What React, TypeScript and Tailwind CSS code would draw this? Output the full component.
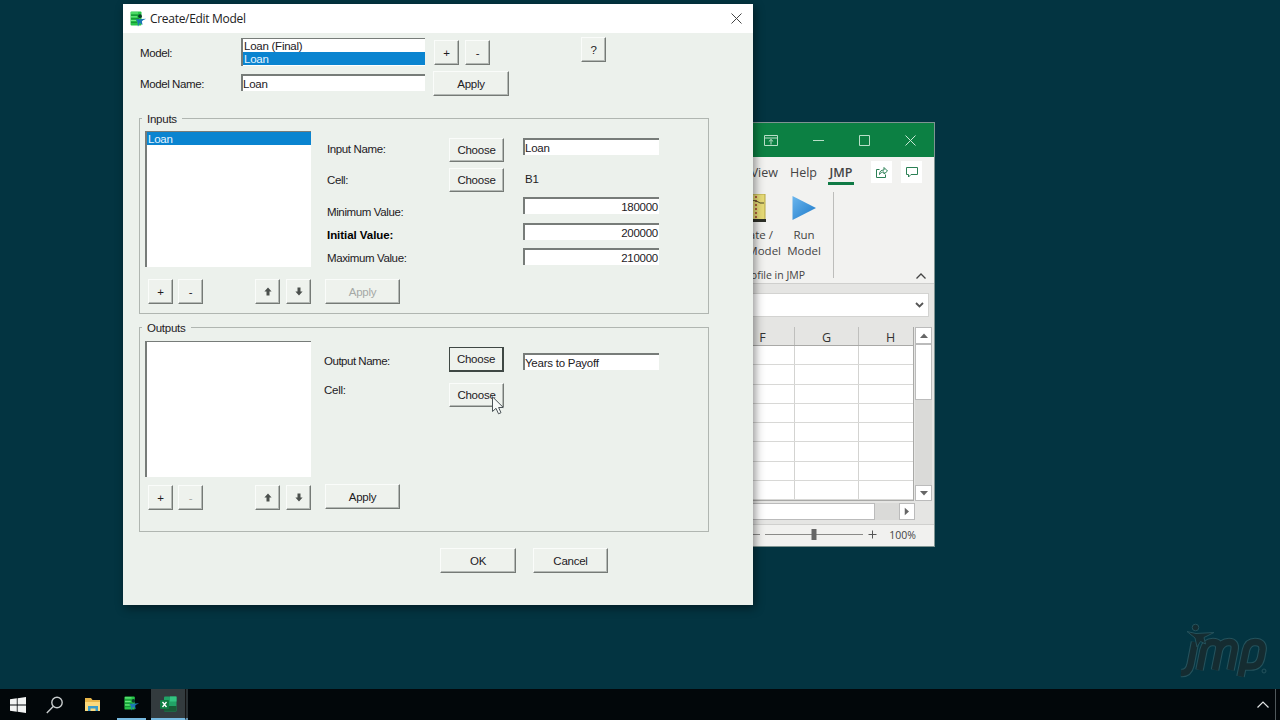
import type { ReactNode } from 'react'
import { clsx } from 'clsx'

function ModelIcon({ className }: { className?: string }) {
  return (
    <svg viewBox="0 0 16 16" className={className}>
      <rect x="0.5" y="0.5" width="11" height="14" rx="1" fill="#27c548" />
      <path d="M1 4.200h10M1 7.800h8M1 11.300h6" stroke="#12852f" strokeWidth="0.9" />
      <path d="M1 2h7M1 5.800h6M1 9.500h5" stroke="#7df08c" strokeWidth="0.9" />
      <circle cx="10" cy="5.200" r="1.900" fill="#0b3b2a" />
      <path d="M5.500 8c3 .8 6.500 0 10.500-.2-1.800 1.200-3.600 1.600-4 2.500-.2 1.200.6 2.500.4 3.700-1.400-.8-2-1.900-2.800-2.200L8 15.700c-.4-2.500.2-5-2.500-7.700z" fill="#1c78b4" />
    </svg>
  )
}

interface ButtonProps {
  children: ReactNode
  className?: string
  disabled?: boolean
  focused?: boolean
}

function Button({ children, className, disabled, focused }: ButtonProps) {
  return (
    <button
      className={clsx(
        'flex shrink-0 items-center justify-center bg-[#eef2ed]',
        focused
          ? 'border border-r-2 border-b-2 border-[#3f4844]'
          : 'border border-t-[#fafcfa] border-l-[#fafcfa] border-r-[#757a76] border-b-[#757a76] shadow-[inset_-1px_-1px_0_#b4b9b5]',
        disabled ? 'text-[#a5a9a6]' : 'text-[#1d201e]',
        className,
      )}
    >
      {children}
    </button>
  )
}

function SmallButton({ children, disabled, className }: ButtonProps) {
  return (
    <Button disabled={disabled} className={clsx('h-[25px] w-[25px]', className)}>
      {children}
    </Button>
  )
}

function Arrow({ down }: { down?: boolean }) {
  return (
    <svg viewBox="0 0 8 9" className={clsx('h-[9px] w-2', down && 'rotate-180')}>
      <path d="M4 0.500 7.600 4.500H5.500V8.500H2.500V4.500H0.400z" fill="#4b504d" />
    </svg>
  )
}

function Field({ children, right, className }: { children: ReactNode; right?: boolean; className?: string }) {
  return (
    <div
      className={clsx(
        'flex h-[17px] items-center border-t-2 border-l-2 border-t-[#777c79] border-l-[#777c79] bg-white pr-px',
        right ? 'justify-end' : 'justify-start',
        className,
      )}
    >
      {children}
    </div>
  )
}

function ListBox({ items, selected, className }: { items: string[]; selected?: string; className?: string }) {
  return (
    <ul className={clsx('border-t border-l-2 border-[#777c79] bg-white', className)}>
      {items.map((item) => (
        <li
          key={item}
          className={clsx('h-[13px] pl-px leading-[14px]', item === selected && 'bg-[#0a84d0] text-[#e6f4ff]')}
        >
          {item}
        </li>
      ))}
    </ul>
  )
}

function Group({ title, children, className }: { title: string; children: ReactNode; className?: string }) {
  return (
    <fieldset className={clsx('ml-4 w-[570px] border border-[#b0b6b1]', className)}>
      <legend className="ml-[2px] h-[14px] px-[5px] leading-[16px]">{title}</legend>
      {children}
    </fieldset>
  )
}

function ListPanel({ items, selected, emptyList }: { items: string[]; selected?: string; emptyList?: boolean }) {
  return (
    <div className="ml-[5px] w-[166px]">
      <ListBox items={items} selected={selected} className="h-[136px]" />
      <div className={clsx('flex pl-[3px]', emptyList ? 'mt-2' : 'mt-3')}>
        <SmallButton>+</SmallButton>
        <SmallButton disabled={emptyList} className="ml-[5px]">-</SmallButton>
        <SmallButton className="ml-auto"><Arrow /></SmallButton>
        <SmallButton className="ml-[6px]"><Arrow down /></SmallButton>
      </div>
    </div>
  )
}

function ModelDialog() {
  return (
    <div className="absolute top-1 left-[123px] h-[601px] w-[630px] bg-[#ecf1ec] text-[11.500px] leading-[14px] tracking-[-0.250px] text-[#1d201e] shadow-[2px_3px_9px_rgba(0,0,0,0.45)]">
      <header className="flex h-[29px] items-center bg-white pr-[11px] pl-[7px]">
        <ModelIcon className="h-4 w-4" />
        <h1 className="ml-1 font-['Open_Sans',sans-serif] text-[12px] tracking-[-0.300px] text-[#222]">
          Create/Edit Model
        </h1>
        <svg viewBox="0 0 11 11" className="ml-auto h-[11px] w-[11px]">
          <path d="M.5.5l10 10M10.500.5l-10 10" stroke="#444" fill="none" />
        </svg>
      </header>

      <section className="flex h-[78px] pl-[17px]">
        <div className="flex w-[101px] flex-col gap-[17px] pt-[13px] tracking-[-0.400px]">
          <label>Model:</label>
          <label>Model Name:</label>
        </div>
        <div className="flex w-[184px] flex-col gap-2 pt-[5px]">
          <ListBox items={['Loan (Final)', 'Loan']} selected="Loan" className="h-[28px]" />
          <Field>Loan</Field>
        </div>
        <div className="ml-2 flex flex-col gap-[6px] pt-[7px]">
          <div className="flex gap-[6px] pl-px">
            <SmallButton>+</SmallButton>
            <SmallButton>-</SmallButton>
          </div>
          <Button className="h-[25px] w-[76px]">Apply</Button>
        </div>
        <div className="ml-[72px] pt-1">
          <SmallButton>?</SmallButton>
        </div>
      </section>

      <Group title="Inputs" className="h-[203px]">
        <div className="flex pt-[6px]">
          <ListPanel items={['Loan']} selected="Loan" />
          <div className="ml-[14px] flex w-[124px] flex-col tracking-[-0.380px]">
            <label className="mt-[11px] ml-[2px]">Input Name:</label>
            <label className="mt-[17px] ml-[2px]">Cell:</label>
            <label className="mt-[18px] ml-[2px]">Minimum Value:</label>
            <label className="mt-[9px] ml-[2px] font-bold tracking-[-0.050px] text-black">Initial Value:</label>
            <label className="mt-[9px] ml-[2px]">Maximum Value:</label>
            <Button disabled className="mt-[14px] h-[25px] w-[75px] tracking-[-0.250px]">Apply</Button>
          </div>
          <div className="flex w-[74px] flex-col gap-[6px] pt-[7px]">
            <Button className="h-[24px] w-[55px]">Choose</Button>
            <Button className="h-[24px] w-[55px]">Choose</Button>
          </div>
          <div className="w-[136px] pt-[7px]">
            <Field>Loan</Field>
            <p className="mt-[17px] ml-[2px]">B1</p>
            <Field right className="mt-[11px]">180000</Field>
            <Field right className="mt-[9px]">200000</Field>
            <Field right className="mt-[8px]">210000</Field>
          </div>
        </div>
      </Group>

      <Group title="Outputs" className="mt-[6px] h-[212px]">
        <div className="flex pt-[7px]">
          <ListPanel items={[]} emptyList />
          <div className="ml-[13px] flex w-[125px] flex-col">
            <label className="mt-[13px] tracking-[-0.480px]">Output Name:</label>
            <label className="mt-[15px]">Cell:</label>
            <Button className="mt-[87px] ml-px h-[25px] w-[75px]">Apply</Button>
          </div>
          <div className="flex w-[74px] flex-col gap-[11px] pt-[6px]">
            <Button focused className="h-[25px] w-[55px]">Choose</Button>
            <Button className="h-[24px] w-[55px]">Choose</Button>
          </div>
          <div className="w-[136px] pt-[12px]">
            <Field>Years to Payoff</Field>
          </div>
        </div>
      </Group>

      <footer className="mt-4 flex gap-[17px] pl-[317px]">
        <Button className="h-[25px] w-[76px]">OK</Button>
        <Button className="h-[25px] w-[75px]">Cancel</Button>
      </footer>
    </div>
  )
}

function Triangle({ className }: { className?: string }) {
  return (
    <svg viewBox="0 0 8 5" className={clsx('h-[5px] w-2', className)}>
      <path d="M0 5 4 0.500 8 5z" fill="#666" />
    </svg>
  )
}

function ExcelWindow() {
  const columns = ['F', 'G', 'H']
  const rows = [0, 1, 2, 3, 4, 5, 6, 7]

  return (
    <div className="absolute top-[122px] left-[700px] flex h-[425px] w-[235px] flex-col border border-[#7f9492] bg-[#e5e5e3] font-['Open_Sans',sans-serif] text-[#444]">
      <header className="flex h-[34px] shrink-0 items-center justify-end gap-[35px] bg-[#0c8043] pr-[18px]">
        <svg viewBox="0 0 14 11" className="h-[11px] w-[14px]" fill="none" stroke="#b9dfc8">
          <path d="M.5.5h13v10H.5zM.5 3h13M7 9.500V4.500M4.800 6.500 7 4.500l2.200 2" />
        </svg>
        <svg viewBox="0 0 11 11" className="h-[11px] w-[11px]" stroke="#b9dfc8">
          <path d="M0 5.500h11" />
        </svg>
        <svg viewBox="0 0 11 11" className="h-[11px] w-[11px]" fill="none" stroke="#b9dfc8">
          <path d="M.5.5h10v10H.5z" />
        </svg>
        <svg viewBox="0 0 11 11" className="h-[11px] w-[11px]" fill="none" stroke="#c9e8d5">
          <path d="M.5.5l10 10M10.500.5l-10 10" />
        </svg>
      </header>

      <nav className="flex h-[32px] shrink-0 justify-end bg-[#f2f2f0] pr-3 text-[12.500px] leading-[18px]">
        <span className="mt-[7px]">View</span>
        <span className="mt-[7px] ml-3">Help</span>
        <span className="mt-[7px] ml-[11px] h-[21px] w-[26px] border-b-[3px] border-[#0f7a45] text-center font-semibold">
          JMP
        </span>
        <span className="mt-1 ml-[17px] flex h-[22px] w-[21px] items-center justify-center bg-white">
          <svg viewBox="0 0 12 12" className="h-3 w-3" fill="none" stroke="#2b8055">
            <path d="M3.500 3.500H.5v8h9V8.500M3.500 8.500c0-3 1.500-4.500 4.500-4.500V1.500L11.500 5 8 8V6C6 6 4.500 6.800 3.500 8.500z" />
          </svg>
        </span>
        <span className="mt-1 ml-[9px] flex h-[22px] w-[21px] items-center justify-center bg-white">
          <svg viewBox="0 0 12 12" className="h-3 w-3" fill="none" stroke="#2b8055">
            <path d="M.5 1.500h11v7H5l-2.500 2.500V8.500h-2z" />
          </svg>
        </span>
      </nav>

      <div className="flex h-[95px] shrink-0 justify-end border-b border-[#cfcfcd] bg-[#f2f2f0] text-[11.500px] leading-4">
        <div className="flex flex-col items-end">
          <div className="flex">
            <div className="flex w-20 flex-col items-end pt-[5px] whitespace-nowrap">
              <svg viewBox="0 0 24 28" className="mr-[15px] h-7 w-6">
                <rect x="0" y="0" width="23" height="26" fill="#e8dc78" stroke="#b5a744" />
                <rect x="0" y="25" width="24" height="3" fill="#2e3028" />
                <path d="M14 2v22" stroke="#a33b2b" strokeWidth="1.500" strokeDasharray="2 2" />
                <path d="M2 11C8 6 12 5 18 9h4" stroke="#4d4828" fill="none" />
              </svg>
              <span className="mt-[5px] mr-2">Create /</span>
              <span>Edit Model</span>
            </div>
            <div className="ml-[4px] flex w-[38px] flex-col items-center pt-[5px]">
              <svg viewBox="0 0 25 27" className="h-7 w-[25px]">
                <defs>
                  <linearGradient id="run" x1="0" y1="0" x2="1" y2="1">
                    <stop offset="0" stopColor="#6bb6ee" />
                    <stop offset="1" stopColor="#1b78c8" />
                  </linearGradient>
                </defs>
                <path d="M.5 1.500 24 13.500.5 25.500z" fill="url(#run)" />
              </svg>
              <span className="mt-[5px]">Run</span>
              <span>Model</span>
            </div>
          </div>
          <p className="mt-2 pr-[18px] text-[10.500px]">Profile in JMP</p>
        </div>
        <div className="mt-[3px] ml-[10px] h-[86px] w-px bg-[#bdbdbb]" />
        <div className="flex w-[102px] items-end justify-end pr-2 pb-1">
          <svg viewBox="0 0 10 6" className="h-[6px] w-[10px]" fill="none" stroke="#444" strokeWidth="1.300">
            <path d="M.5 5.500 5 1l4.500 4.500" />
          </svg>
        </div>
      </div>

      <div className="mt-[9px] mr-[5px] flex h-6 shrink-0 items-center justify-end border border-[#d3d3d1] bg-white pr-1">
        <svg viewBox="0 0 9 6" className="h-[6px] w-[9px]" fill="none" stroke="#555" strokeWidth="1.800">
          <path d="M1 1l3.500 3.500L8 1" />
        </svg>
      </div>

      <div className="mt-[10px] flex h-[174px] shrink-0">
        <div className="w-[213px] overflow-hidden border-r border-b border-[#a9a9a7]">
          <div className="flex h-[19px] border-b border-[#a9a9a7] text-[12.500px] leading-[22px] text-[#333]">
            {columns.map((column) => (
              <span
                key={column}
                className="w-16 shrink-0 border-r border-[#bfbfbd] text-center first:w-[94px] first:pl-[30px]"
              >
                {column}
              </span>
            ))}
          </div>
          {rows.map((row) => (
            <div key={row} className="flex h-[19.300px] border-b border-[#d8d8d6] bg-white">
              <span className="w-[94px] border-r border-[#d3d3d1]" />
              <span className="w-16 border-r border-[#d3d3d1]" />
            </div>
          ))}
        </div>
        <div className="ml-px flex w-[17px] flex-col bg-[#dadad8]">
          <div className="flex h-[17px] items-center justify-center border border-[#bbb] bg-white"><Triangle /></div>
          <div className="h-14 border border-[#bbb] bg-white" />
          <div className="mt-auto flex h-4 items-center justify-center border border-[#bbb] bg-white">
            <Triangle className="rotate-180" />
          </div>
        </div>
      </div>

      <div className="mt-[2px] flex h-[17px] w-[214px] shrink-0 justify-end bg-[#dadad8]">
        <div className="flex-1 border border-[#bbb] bg-white" />
        <div className="ml-6 flex w-4 items-center justify-center border border-[#bbb] bg-white">
          <Triangle className="rotate-90" />
        </div>
      </div>

      <footer className="mt-1 flex flex-1 items-center justify-end border-t border-[#d0d0ce] bg-[#f1f1ef] pr-[18px] text-[10.500px]">
        <svg viewBox="0 0 130 12" className="mr-3 mb-[3px] h-3 w-[130px]" fill="none" stroke="#8a8a88">
          <path d="M4 6.500h9M18 6.500h98" />
          <path d="M121.500 6.500h8M125.500 2.500v8" stroke="#555" />
          <path d="M64.500 1h5v11h-5z" fill="#666" stroke="none" />
        </svg>
        100%
      </footer>
    </div>
  )
}

function JmpLogo() {
  const strokes = [
    { color: '#24525c', width: 8.6 },
    { color: '#152c31', width: 6.4 },
  ]

  return (
    <svg viewBox="0 0 92 60" className="absolute top-[622px] left-[1178px] h-[60px] w-[92px]">
      <g fill="none" strokeLinejoin="round">
        {strokes.map(({ color, width }) => (
          <g key={color} stroke={color} strokeWidth={width}>
            <path d="M17 20 12.500 43Q10.500 51.500 3 51" />
            <path d="M21.500 48 25.500 28Q27.500 20 35 20Q42.500 20 41 28L37 48M41 28Q43.500 20 51 20Q58 20 56.500 28L52.500 48" />
            <path d="M62.500 54.500 68 28Q70 20 77 20Q85.500 20 84.500 28L83 36Q81 44.500 73 44.500H66" />
          </g>
        ))}
      </g>
      <circle cx="17.500" cy="5.500" r="3.300" fill="#152c31" stroke="#24525c" />
      <path d="M9 9.500 18 11.500 36 10.500 26 15.500 27.500 22 22.500 19.500 19 25 17 16z" fill="#152c31" stroke="#24525c" />
      <circle cx="86" cy="49" r="2" fill="none" stroke="#24525c" />
    </svg>
  )
}

function Taskbar() {
  return (
    <div className="absolute bottom-0 left-0 flex h-[31px] w-full items-center bg-[#02070a]">
      <svg viewBox="0 0 16 16" className="ml-[10px] h-4 w-4" fill="#f1f3f3">
        <path d="M0 2.300 6.800 1.300V7.600H0zM7.600 1.200 16 0V7.600H7.600zM0 8.400H6.800V14.700L0 13.700zM7.600 8.400H16V16L7.600 14.800z" />
      </svg>
      <svg viewBox="0 0 18 18" className="ml-5 h-[18px] w-[18px]" fill="none" stroke="#c9cdce" strokeWidth="1.400">
        <circle cx="11" cy="6.500" r="5.200" />
        <path d="M7.200 10.400.8 17" />
      </svg>
      <svg viewBox="0 0 16 14" className="ml-[21px] h-[14px] w-4">
        <path d="M0 0h6l1.500 2H15v11H0z" fill="#e9b64a" />
        <path d="M0 4h15v9H0z" fill="#fbd97c" />
        <path d="M3 13V8h10v5h-2.500v-2.500h-5V13z" fill="#3a9cc9" />
      </svg>
      <div className="ml-4 flex h-full w-[29px] items-center justify-center border-b-2 border-[#76b9e0]">
        <ModelIcon className="h-[15px] w-[15px]" />
      </div>
      <div className="ml-[5px] flex h-full w-[34px] items-center justify-center border-b-2 border-[#76b9e0] bg-[#333b3e]">
        <svg viewBox="0 0 17 16" className="h-4 w-[17px]">
          <rect x="4" y="0.500" width="12.500" height="15" rx="1" fill="#21a366" />
          <path d="M10 .5h6.500v5H10z" fill="#33c481" />
          <path d="M4 10h12.500v5.500H4z" fill="#185c37" />
          <rect x="0" y="4" width="9" height="9" rx="1" fill="#107c41" />
          <path d="M2.500 6l4 5M6.500 6l-4 5" stroke="#fff" strokeWidth="1.300" />
        </svg>
      </div>
      <div className="h-full w-[3px] border-b-2 border-l border-[#5f8ca8] border-l-[#111] bg-[#2a3134]" />
      <svg viewBox="0 0 12 7" className="mr-[6px] ml-auto h-[7px] w-3" fill="none" stroke="#e3e6e6" strokeWidth="1.200">
        <path d="M.5 6.500 6 1l5.500 5.500" />
      </svg>
      <div className="mr-[4px] h-full w-px bg-[#50585b]" />
    </div>
  )
}

function Cursor() {
  return (
    <svg viewBox="0 0 12 19" className="absolute top-[396px] left-[492px] h-[19px] w-3">
      <path
        d="M.5.800V15.500L4 12.300 6.500 17.800 9 16.700 6.600 11.500H11.300z"
        fill="#f8faf9"
        stroke="#4b5357"
      />
    </svg>
  )
}

export default function App() {
  return (
    <main className="relative h-[720px] w-[1280px] overflow-hidden bg-[#033441] font-['Liberation_Sans',Arial,sans-serif]">
      <ExcelWindow />
      <ModelDialog />
      <Cursor />
      <JmpLogo />
      <Taskbar />
    </main>
  )
}
